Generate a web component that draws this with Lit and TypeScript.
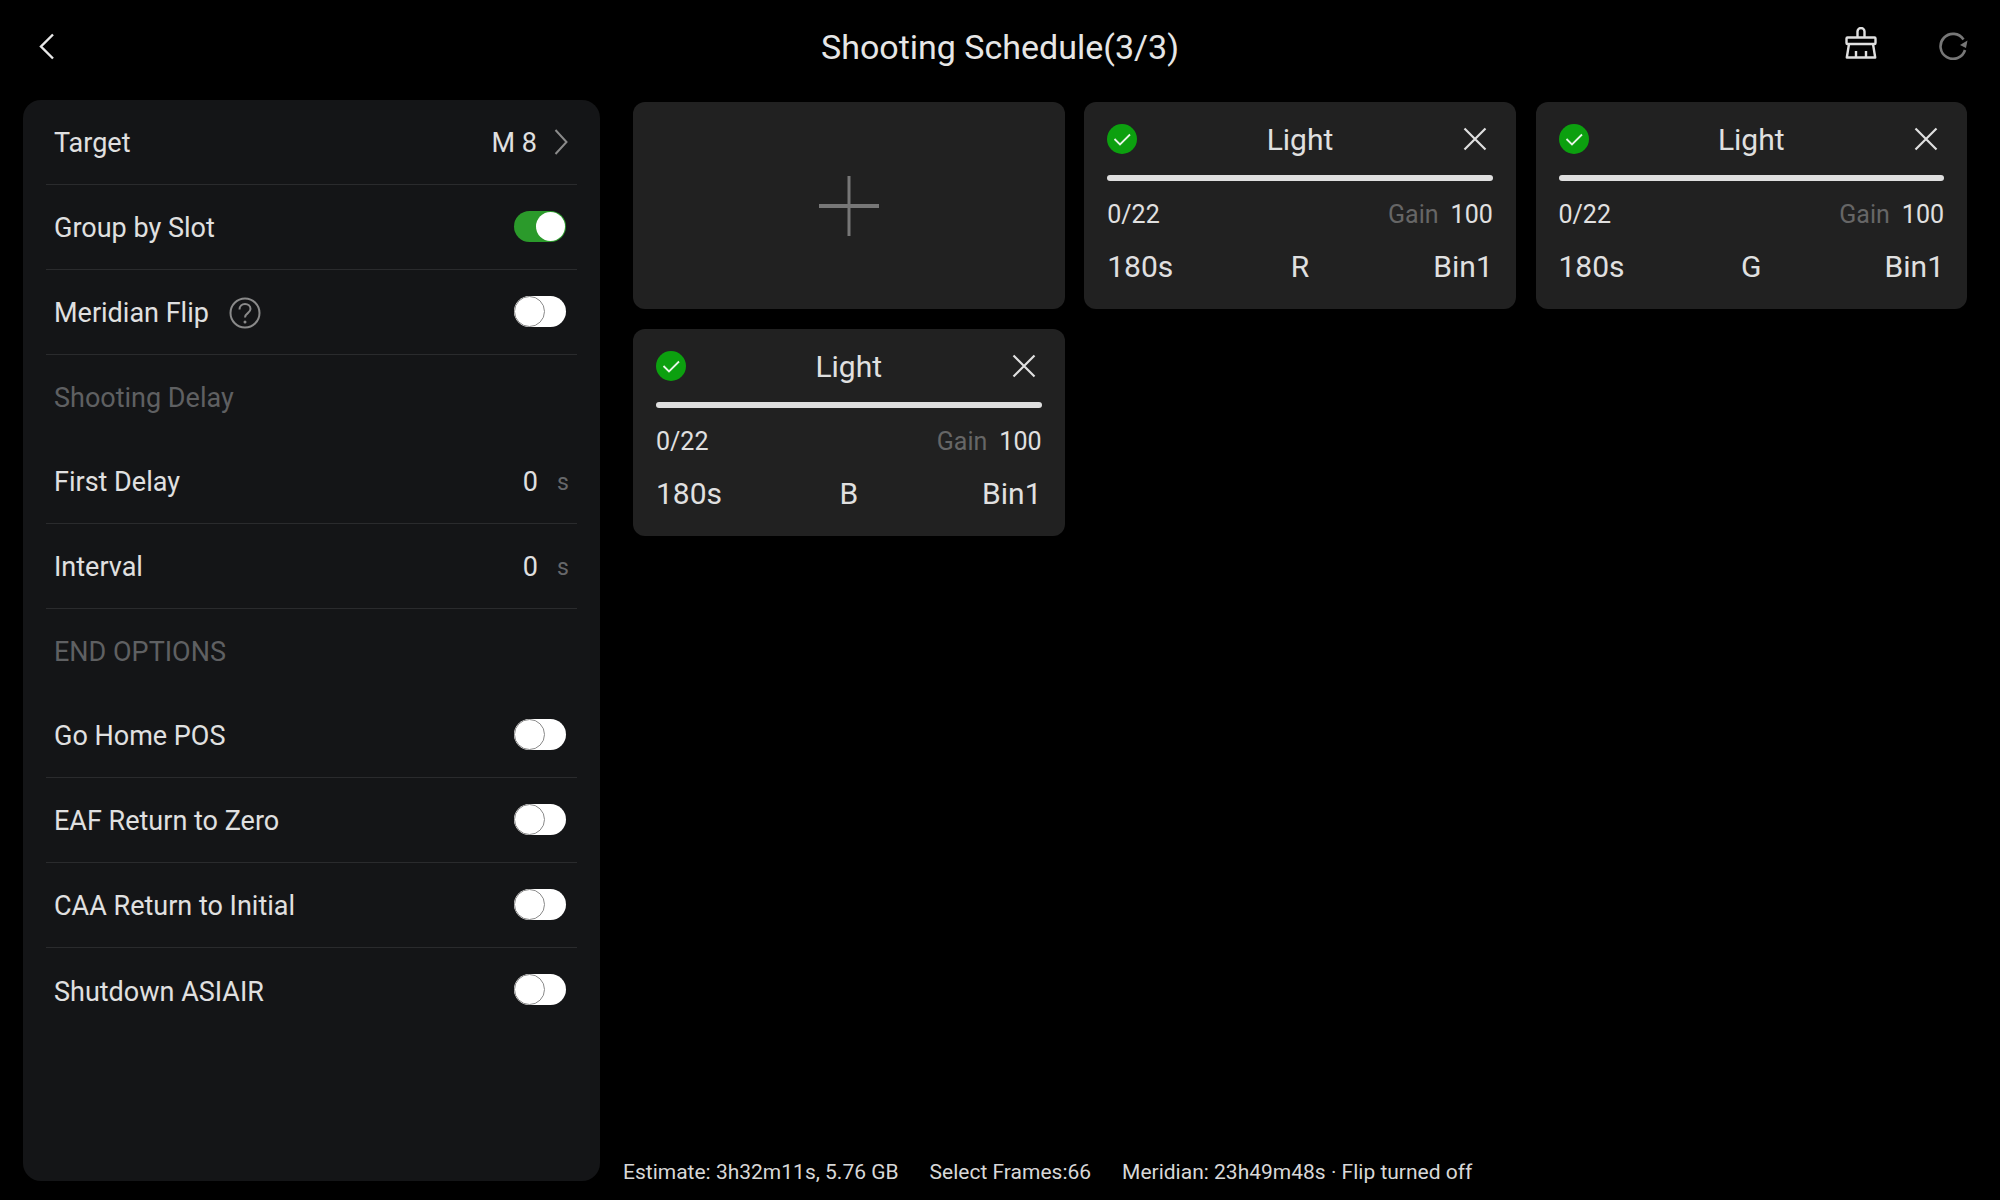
import { LitElement, html, css, nothing } from "lit";
import { customElement } from "lit/decorators.js";

const toggle = (on: boolean) => html`<span class="toggle ${on ? "on" : ""}"><span class="knob"></span></span>`;

@customElement("app-root")
export class AppRoot extends LitElement {
  static styles = css`
    :host { display: block; width: 2000px; height: 1200px; background: #000; color: #e0e0e0; font-family: Roboto, "Noto Sans", sans-serif; overflow: hidden; }
    .page { display: flex; flex-direction: column; height: 1200px; }
    .top { height: 100px; flex: none; display: grid; grid-template-columns: 1fr auto 1fr; align-items: center; padding: 0 31px 6px 39px; box-sizing: border-box; }
    .back { margin-bottom: 2px; }
    .title { font-size: 34px; color: #e6e6e6; margin-left: -8px; }
    .tools { display: flex; justify-content: flex-end; align-items: center; gap: 61px; }
    .broom { margin-bottom: 8px; }
    .refresh { margin-bottom: 2px; }
    svg { display: block; flex: none; }
    .body { display: flex; height: 1081px; flex: none; }
    .side { width: 577px; margin-left: 23px; background: #141517; border-radius: 18px; padding: 0 23px; box-sizing: border-box; flex: none; }
    .row { height: 85px; box-sizing: border-box; padding: 2px 11px 0 8px; display: flex; align-items: center; font-size: 27px; border-bottom: 1px solid #2a2b2d; color: #e0e0e0; }
    .row.plain { border-bottom: none; }
    .row.head { border-bottom: none; color: #5f6062; height: 84px; }
    .row .grow { flex: 1; }
    .help { margin-left: 20px; }
    .val { margin-right: 17px; }
    .val.num { margin-right: 19px; }
    .chev { margin: -2px -2px 0 0; }
    .unit { font-size: 23px; color: #66676a; width: 11px; margin-right: -2px; }
    .toggle { width: 52px; height: 31px; border-radius: 16px; background: #fff; position: relative; display: block; margin-top: -4px; }
    .toggle .knob { position: absolute; left: 0; top: 0; width: 31px; height: 31px; box-sizing: border-box; border: 1px solid #8a8a8a; border-radius: 50%; background: #fff; }
    .toggle.on { background: #2b9a2b; }
    .toggle.on .knob { left: 22px; top: 1px; width: 29px; height: 29px; border: none; }
    .main { flex: 1; display: flex; flex-direction: column; padding-left: 33px; padding-top: 2px; min-width: 0; }
    .grid { flex: 1; display: grid; grid-template-columns: repeat(3, 431.5px); grid-auto-rows: 207px; gap: 20px 19.750px; align-content: start; }
    .card { background: #212121; border-radius: 12px; padding: 19px 23px 0; box-sizing: border-box; display: flex; flex-direction: column; }
    .add { display: flex; align-items: center; justify-content: center; padding: 0; }
    .chead { display: grid; grid-template-columns: 1fr auto 1fr; align-items: center; height: 30px; }
    .chead .x { justify-self: end; margin-right: 6px; }
    .ltitle { font-size: 30px; color: #e0e0e0; margin-top: 1px; }
    .bar { height: 6px; border-radius: 3px; background: #dfdfdf; margin-top: 24px; }
    .r1 { display: flex; justify-content: space-between; font-size: 25px; line-height: 30px; margin-top: 19px; }
    .gain { color: #666; margin-right: 12px; }
    .r2 { display: grid; grid-template-columns: 1fr auto 1fr; font-size: 30px; line-height: 36px; margin-top: 19px; }
    .r2 .e { text-align: right; }
    .status { display: flex; margin-left: -10px; gap: 31px; font-size: 21px; line-height: 26px; color: #d8d8d8; height: 22px; flex: none; }
  `;

  private card(filter: string) {
    return html`<div class="card">
      <div class="chead">
        <svg width="30" height="30" viewBox="0 0 30 30"><circle cx="15" cy="15" r="15" fill="#0ca00f"/><path d="M7.500 15l5.500 5.500 10-10" fill="none" stroke="#e8f5e8" stroke-width="1.800"/></svg>
        <span class="ltitle">Light</span>
        <svg class="x" width="24" height="24" viewBox="0 0 24 24"><path d="M1.500 1.500l21 21M22.500 1.500l-21 21" stroke="#e0e0e0" stroke-width="2.200" fill="none"/></svg>
      </div>
      <div class="bar"></div>
      <div class="r1"><span>0/22</span><span><span class="gain">Gain</span>100</span></div>
      <div class="r2"><span>180s</span><span>${filter}</span><span class="e">Bin1</span></div>
    </div>`;
  }

  private row(label: string, right: unknown = nothing, cls = "") {
    return html`<div class="row ${cls}"><span>${label}</span><span class="grow"></span>${right}</div>`;
  }

  private num(v: string) {
    return html`<span class="val num">${v}</span><span class="unit">s</span>`;
  }

  render() {
    return html`<div class="page">
      <div class="top">
        <svg class="back" width="16" height="27" viewBox="0 0 16 27"><path d="M14 1.500L2 13.500l12 12" fill="none" stroke="#e8e8e8" stroke-width="2.400"/></svg>
        <div class="title">Shooting Schedule(3/3)</div>
        <div class="tools">
          <svg class="broom" width="32" height="32" viewBox="0 0 32 32" fill="none" stroke="#e0e0e0" stroke-width="2.400" stroke-linejoin="round"><path d="M12.500 10.500V4.500a3.500 3.500 0 0 1 7 0v6"/><rect x="1.500" y="10.500" width="29" height="6.500" rx="1"/><path d="M4 17L1.800 30.500h28.400L28 17M11 30.500V24M21 30.500V24"/></svg>
          <svg class="refresh" width="31" height="28" viewBox="0 0 31 28" fill="none"><path d="M27 18a12.500 12.500 0 1 1-1.500-10.500" stroke="#777" stroke-width="2.600"/><path d="M29.500 8.500L22 13l6 3z" fill="#777"/></svg>
        </div>
      </div>
      <div class="body">
        <div class="side">
          ${this.row("Target", html`<span class="val">M 8</span><svg class="chev" width="14" height="26" viewBox="0 0 14 26"><path d="M1.500 1l11 12-11 12" fill="none" stroke="#8a8a8a" stroke-width="2"/></svg>`)}
          ${this.row("Group by Slot", toggle(true))}
          <div class="row"><span>Meridian Flip</span>
            <svg class="help" width="32" height="32" viewBox="0 0 32 32"><circle cx="16" cy="16" r="14.500" fill="none" stroke="#8a8a8a" stroke-width="2"/><path d="M10.500 12.500c0-3.500 2.500-5.500 5.500-5.500s5.500 2 5.500 5c0 4-5.500 4.300-5.500 8.500" fill="none" stroke="#8a8a8a" stroke-width="2"/><circle cx="16" cy="25" r="1.500" fill="#8a8a8a"/></svg>
            <span class="grow"></span>${toggle(false)}</div>
          ${this.row("Shooting Delay", nothing, "head")}
          ${this.row("First Delay", this.num("0"))}
          ${this.row("Interval", this.num("0"))}
          ${this.row("END OPTIONS", nothing, "head")}
          ${this.row("Go Home POS", toggle(false))}
          ${this.row("EAF Return to Zero", toggle(false))}
          ${this.row("CAA Return to Initial", toggle(false))}
          ${this.row("Shutdown ASIAIR", toggle(false), "plain")}
        </div>
        <div class="main">
          <div class="grid">
            <div class="card add"><svg width="60" height="60" viewBox="0 0 60 60"><path d="M0 30h60" stroke="#777" stroke-width="4"/><path d="M30 0v60" stroke="#777" stroke-width="3"/></svg></div>
            ${this.card("R")}${this.card("G")}${this.card("B")}
          </div>
          <div class="status"><span>Estimate: 3h32m11s, 5.76 GB</span><span>Select Frames:66</span><span>Meridian: 23h49m48s · Flip turned off</span></div>
        </div>
      </div>
    </div>`;
  }
}
